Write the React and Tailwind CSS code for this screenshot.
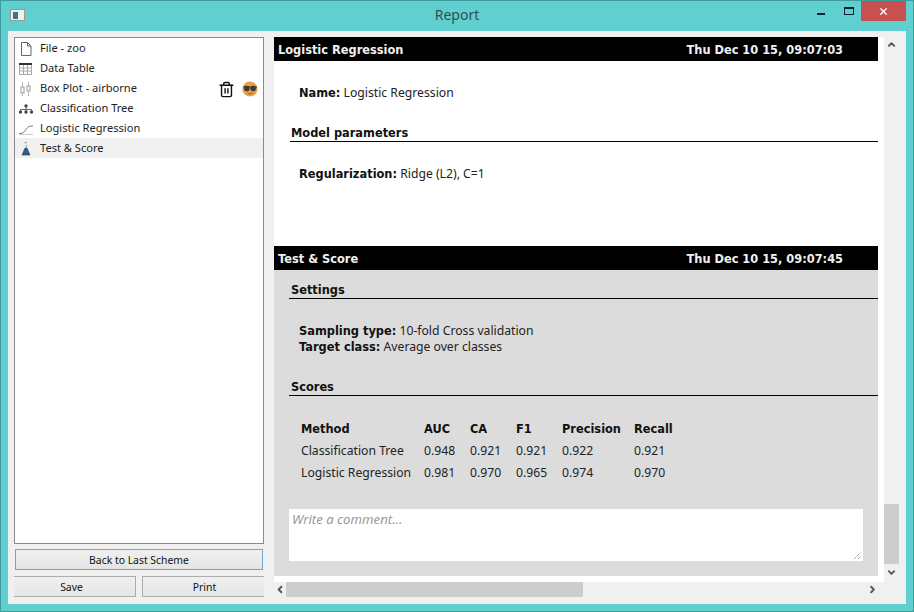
import { ChevronUp, ChevronDown, ChevronLeft, ChevronRight, X, Trash2 } from "lucide-react";

const ui = "font-['Noto_Sans',sans-serif]";

function FileIcon() {
  return (
    <svg width="16" height="16" viewBox="0 0 16 16" fill="none" stroke="#666">
      <path d="M3.5 1.5h6l3.5 3.5v9.5h-9.5z" fill="#fff" />
      <path d="M9.5 1.5v3.5h3.5" />
    </svg>
  );
}

function TableIcon() {
  return (
    <svg width="16" height="16" viewBox="0 0 16 16" fill="none" stroke="#aaa">
      <rect x="1.5" y="2.5" width="12" height="11" fill="#fff" />
      <path d="M1 2.5h13M1 3.5h13" stroke="#333" />
      <path d="M1.5 7h12M1.5 10h12M5.5 4v9M9.5 4v9" />
    </svg>
  );
}

function BoxPlotIcon() {
  return (
    <svg width="16" height="16" viewBox="0 0 16 16" fill="none" stroke="#999">
      <path d="M4.5 1v14M10.5 1v14" strokeDasharray="1.5 1" />
      <rect x="3" y="6" width="3" height="6" fill="#fff" />
      <rect x="9" y="5" width="3" height="5" fill="#fff" />
    </svg>
  );
}

function TreeIcon() {
  return (
    <svg width="16" height="16" viewBox="0 0 16 16" fill="#444" stroke="none">
      <circle cx="8" cy="5" r="1.7" />
      <circle cx="2.5" cy="11" r="1.7" />
      <circle cx="8" cy="11" r="1.7" />
      <circle cx="13.5" cy="11" r="1.7" />
      <path d="M2.5 8.5h11M2.5 8.5v2M8 5v5M13.5 8.5v2" stroke="#666" fill="none" />
    </svg>
  );
}

function CurveIcon() {
  return (
    <svg width="16" height="16" viewBox="0 0 16 16" fill="none">
      <path d="M1 12.5c4 0 5-1 7-4s3-3.5 7-3.5" stroke="#777" />
      <path d="M1 13.5h14" stroke="#ccc" />
    </svg>
  );
}

function FlaskIcon() {
  return (
    <svg width="16" height="16" viewBox="0 0 16 16" fill="none">
      <path d="M7 1.5h2M7 1.5v1M8.5 4v2" stroke="#999" />
      <path d="M7 7h2l3 7H4z" fill="#2f5d8c" stroke="#223f60" strokeWidth="0.6" />
    </svg>
  );
}

function NerdIcon() {
  return (
    <svg width="16" height="16" viewBox="0 0 16 16">
      <circle cx="8" cy="8" r="7.6" fill="#e8a048" />
      <path d="M1 6h14" stroke="#333" strokeWidth="1" />
      <circle cx="4.8" cy="7.5" r="2.5" fill="#3c3c3c" stroke="#222" strokeWidth="0.5" />
      <circle cx="11.2" cy="7.5" r="2.5" fill="#3c3c3c" stroke="#222" strokeWidth="0.5" />
      <path d="M5.5 12c1.5 1 3.5 1 5 0" stroke="#a85f18" fill="none" />
    </svg>
  );
}

const items = [
  { label: "File - zoo", icon: <FileIcon /> },
  { label: "Data Table", icon: <TableIcon /> },
  { label: "Box Plot - airborne", icon: <BoxPlotIcon />, hover: true },
  { label: "Classification Tree", icon: <TreeIcon /> },
  { label: "Logistic Regression", icon: <CurveIcon /> },
  { label: "Test & Score", icon: <FlaskIcon />, selected: true },
];

const scores = [
  ["Classification Tree", "0.948", "0.921", "0.921", "0.922", "0.921"],
  ["Logistic Regression", "0.981", "0.970", "0.965", "0.974", "0.970"],
];

const bold = "font-['DejaVu_Sans',sans-serif] text-[11.4px] font-bold text-[#111]";

function ReportHeader({ title, time }) {
  return (
    <div className="flex h-6 items-center justify-between bg-black pl-1 pr-[35px] pt-[3px] font-['DejaVu_Sans',sans-serif] text-[11.4px] font-bold text-[#f0f0f0]">
      <span>{title}</span>
      <span>{time}</span>
    </div>
  );
}

function SectionTitle({ children, className }) {
  return (
    <div className={`border-b border-black leading-[16px] ${bold} ${className}`}>
      {children}
    </div>
  );
}

function Field({ label, value }) {
  return (
    <div className="h-4 text-[12.2px] leading-4 text-[#222]">
      <b className={bold}>{label}</b> {value}
    </div>
  );
}

function SideButton({ children, className }) {
  return (
    <button className={`flex h-[21px] items-center justify-center border bg-gradient-to-b from-[#f0f0f0] to-[#e5e5e5] pt-[2px] text-[10.4px] text-[#111] ${className}`}>
      {children}
    </button>
  );
}

export default function App() {
  return (
    <div className={`flex h-[612px] w-[914px] flex-col overflow-hidden border border-[#3f9c9c] bg-[#5fd0cf] px-[7px] pb-[7px] ${ui}`}>
      <div className="relative flex h-[30px] shrink-0 items-center justify-center pb-1 text-[14px] text-[#2f4f4f]">
        Report
        <div className="absolute left-[2px] top-[8px] flex h-[12px] w-[15px] items-center border border-[#999] bg-[#f0f0f0] pl-[2px]">
          <div className="h-[7px] w-[5px] bg-[#2f7f78]" />
        </div>
        <div className="absolute right-[81px] top-[12px] h-[2px] w-[8px] bg-[#123]" />
        <div className="absolute right-[52px] top-[6px] h-[8px] w-[10px] border border-[#123] border-t-2" />
        <div className="absolute right-0 top-0 flex h-[20px] w-[45px] items-center justify-center bg-[#c75050]">
          <X size={11} strokeWidth={3} color="#fff" />
        </div>
      </div>

      <div className="flex min-h-0 flex-1 bg-[#f0f0f0] px-[6px] pt-[6px]">
        <div className="flex w-[250px] shrink-0 flex-col">
          <div className="h-[507px] border border-[#8a8a8a] bg-white">
            {items.map((item) => (
              <div
                key={item.label}
                className={`flex h-5 items-center gap-[6px] pl-[3px] pr-[5px] text-[11.1px] text-[#222] ${item.selected ? "bg-[#f0f0f0]" : ""}`}
              >
                <span className="shrink-0 pt-[2px]">{item.icon}</span>
                <span className="flex-1">{item.label}</span>
                {item.hover && (
                  <span className="flex items-center gap-[7px] pt-[2px]">
                    <Trash2 size={17} strokeWidth={2} color="#111" />
                    <NerdIcon />
                  </span>
                )}
              </div>
            ))}
          </div>
          <SideButton className="mx-px mt-[5px] border-[#6aa6dc]">Back to Last Scheme</SideButton>
          <div className="mt-[6px] flex gap-[6px]">
            <SideButton className="w-[122px] border-[#acacac] border-l-0 pr-[6px]">Save</SideButton>
            <SideButton className="w-[122px] border-[#acacac] border-r-0 pl-[2px]">Print</SideButton>
          </div>
        </div>

        <div className="ml-[10px] flex min-w-0 flex-1 flex-col">
          <div className="flex h-[545px] shrink-0">
            <div className="w-[610px] shrink-0 bg-white pr-[6px]">
              <ReportHeader title="Logistic Regression" time="Thu Dec 10 15, 09:07:03" />
              <div className="h-[185px] pl-[16px] pt-[24px]">
                <div className="pl-[9px]">
                  <Field label="Name:" value="Logistic Regression" />
                </div>
                <SectionTitle className="mt-[24px] pl-px">Model parameters</SectionTitle>
                <div className="mt-[24px] pl-[9px]">
                  <Field label="Regularization:" value="Ridge (L2), C=1" />
                </div>
              </div>
              <ReportHeader title="Test & Score" time="Thu Dec 10 15, 09:07:45" />
              <div className="h-[306px] bg-[#dcdcdc] pl-[15px] pt-[12px]">
                <SectionTitle className="pl-[2px]">Settings</SectionTitle>
                <div className="mt-[24px] pl-[10px]">
                  <Field label="Sampling type:" value="10-fold Cross validation" />
                  <Field label="Target class:" value="Average over classes" />
                </div>
                <SectionTitle className="mt-[24px] pl-[2px]">Scores</SectionTitle>
                <table className="ml-[10px] mt-[22px] border-collapse text-[12.2px] text-[#222]">
                  <thead>
                    <tr className={`h-[22px] ${bold}`}>
                      <th className="w-[125px] pl-[2px] pt-[2px] text-left">Method</th>
                      <th className="w-[46px] pt-[2px] text-left">AUC</th>
                      <th className="w-[46px] pt-[2px] text-left">CA</th>
                      <th className="w-[46px] pt-[2px] text-left">F1</th>
                      <th className="w-[72px] pt-[2px] text-left">Precision</th>
                      <th className="pt-[2px] text-left">Recall</th>
                    </tr>
                  </thead>
                  <tbody>
                    {scores.map((row) => (
                      <tr key={row[0]} className="h-[22px]">
                        {row.map((cell, i) => (
                          <td key={i} className={i === 0 ? "pl-[2px]" : ""}>{cell}</td>
                        ))}
                      </tr>
                    ))}
                  </tbody>
                </table>
                <div className="relative mt-[25px] h-[52px] w-[574px] bg-white pl-[3px] pt-px text-[13.2px] italic text-[#999]">
                  Write a comment...
                  <svg className="absolute bottom-px right-px" width="9" height="9" viewBox="0 0 9 9" stroke="#777" fill="none">
                    <path d="M1 8l7-7M5 8l3-3" strokeDasharray="1 1" />
                  </svg>
                </div>
              </div>
            </div>
            <div className="flex w-[15px] shrink-0 flex-col items-center">
              <ChevronUp size={11} strokeWidth={4} color="#555" className="h-[15px]" />
              <div className="mt-[452px] h-[60px] w-[15px] bg-[#cdcdcd]" />
              <ChevronDown size={11} strokeWidth={4} color="#555" className="mt-[1px] h-[15px]" />
            </div>
          </div>
          <div className="flex h-[15px] w-[604px] items-center">
            <ChevronLeft size={11} strokeWidth={4} color="#555" className="w-[12px] shrink-0" />
            <div className="h-[15px] w-[297px] bg-[#cdcdcd]" />
            <ChevronRight size={11} strokeWidth={4} color="#555" className="ml-auto shrink-0" />
          </div>
        </div>
      </div>
    </div>
  );
}
